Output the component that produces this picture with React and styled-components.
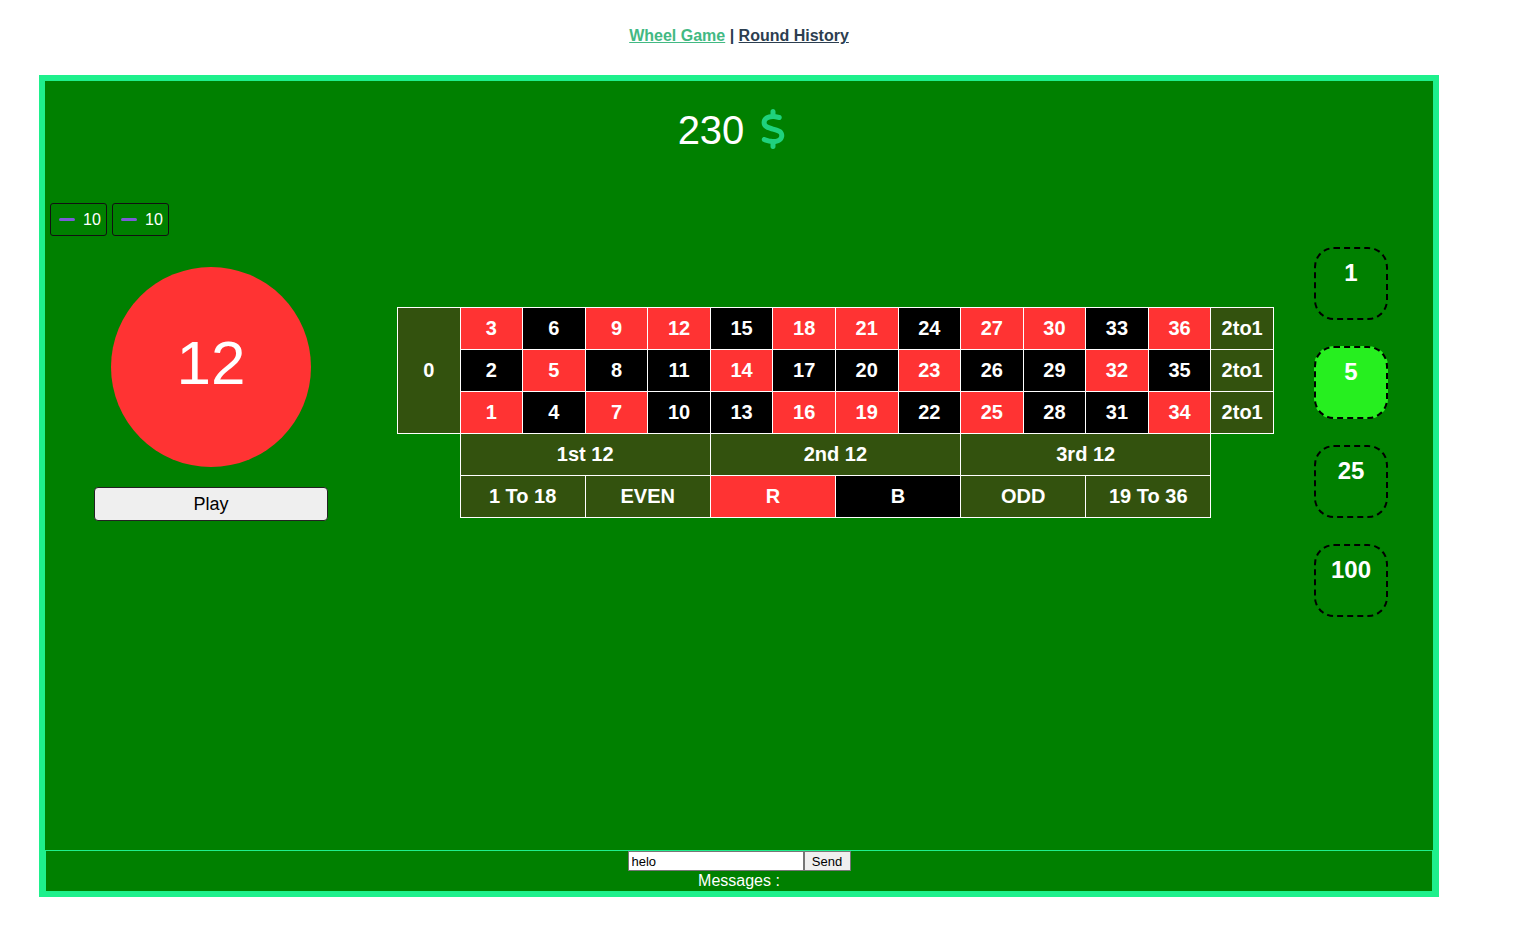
import React from 'react'
import styled, { createGlobalStyle } from 'styled-components'
import { FaDollarSign } from 'react-icons/fa6'

const GlobalStyle = createGlobalStyle`
    body {
        margin: 0;
        background: #fff;
        font-family: "Liberation Sans", Arial, Helvetica, sans-serif;
    }
`

const Page = styled.div`
    width: 1400px;
    margin-left: 39px;
`
const Nav = styled.nav`
    padding-top: 27px;
    height: 18px;
    line-height: 18px;
    text-align: center;
    font-size: 16px;
    font-weight: bold;
    color: #2c3e50;
    margin-bottom: 30px;
`
const NavLink = styled.a`
    color: ${p => (p.$active ? '#42b983' : '#2c3e50')};
    text-decoration: underline;
    cursor: pointer;
`
const Board = styled.div`
    height: 810px;
    border: 6px solid #1ef08c;
    background: #008000;
    display: flex;
    flex-direction: column;
`
const Balance = styled.div`
    padding-top: 26px;
    height: 46px;
    line-height: 46px;
    text-align: center;
    font-size: 40px;
    color: #fff;
    padding-right: 7px;
    svg {
        color: #1fd27d;
        vertical-align: -5px;
        margin-left: 9px;
    }
`
const BetList = styled.div`
    display: flex;
    gap: 5px;
    margin: 50px 0 0 5px;
`
const BetChip = styled.div`
    width: 57px;
    height: 33px;
    box-sizing: border-box;
    border: 1px solid #111;
    border-radius: 3px;
    display: flex;
    align-items: center;
    padding-left: 8px;
    gap: 8px;
    color: #fff;
    font-size: 16px;
`
const Dash = styled.span`
    width: 16px;
    height: 3px;
    border-radius: 1.5px;
    background: #7b5cd6;
`
const MainRow = styled.div`
    display: flex;
    align-items: flex-start;
    margin-top: 11px;
`
const LeftColumn = styled.div`
    width: 234px;
    margin: 20px 0 0 49px;
    display: flex;
    flex-direction: column;
    align-items: center;
`
const Ball = styled.div`
    width: 200px;
    height: 200px;
    box-sizing: border-box;
    padding-bottom: 10px;
    border-radius: 50%;
    background: #ff3333;
    color: #fff;
    font-size: 62px;
    display: flex;
    align-items: center;
    justify-content: center;
`
const PlayButton = styled.button`
    width: 234px;
    height: 34px;
    margin-top: 20px;
    background: #efefef;
    border: 1px solid #222;
    border-radius: 4px;
    font-family: "Liberation Sans", Arial, sans-serif;
    font-size: 18px;
    color: #000;
    cursor: pointer;
`
const Table = styled.table`
    margin: 60px 0 0 69px;
    width: 877px;
    table-layout: fixed;
    border-collapse: collapse;
`
const Row = styled.tr`
    height: 42px;
`
const Cell = styled.td`
    border: ${p => (p.$empty ? 'none' : '1px solid #fff')};
    background: ${p =>
        p.$empty ? 'transparent' : p.$color === 'red' ? '#ff3333' : p.$color === 'black' ? '#000' : '#33520e'};
    color: #fff;
    font-size: 20px;
    font-weight: bold;
    text-align: center;
    padding: 0;
    cursor: pointer;
`
const ChipColumn = styled.div`
    margin-left: 40px;
    display: flex;
    flex-direction: column;
    gap: 26px;
`
const Chip = styled.div`
    width: 74px;
    height: 73px;
    box-sizing: border-box;
    border: 2px dashed #000;
    border-radius: 20px;
    background: ${p => (p.$selected ? '#26ef1f' : 'transparent')};
    color: #fff;
    font-size: 24px;
    font-weight: bold;
    text-align: center;
    padding-top: 10px;
    cursor: pointer;
`
const Footer = styled.div`
    margin-top: auto;
    border: 1px solid #1ef08c;
    border-bottom: none;
    display: flex;
    flex-direction: column;
    align-items: center;
`
const MessageForm = styled.div`
    display: flex;
    height: 20px;
`
const MessageInput = styled.input`
    width: 176px;
    height: 20px;
    box-sizing: border-box;
    border: 1px solid #767676;
    padding: 0 3px;
    font-family: "Liberation Sans", Arial, sans-serif;
    font-size: 13px;
    outline: none;
`
const SendButton = styled.button`
    width: 47px;
    height: 20px;
    box-sizing: border-box;
    border: 1px solid #767676;
    background: #efefef;
    padding: 0;
    font-family: "Liberation Sans", Arial, sans-serif;
    font-size: 13px;
`
const Messages = styled.div`
    color: #fff;
    font-size: 16px;
    line-height: 20px;
    height: 20px;
`

const reds = [1, 3, 5, 7, 9, 12, 14, 16, 18, 19, 21, 23, 25, 27, 30, 32, 34, 36]
const colorOf = n => (reds.includes(n) ? 'red' : 'black')

const App = () => {
    const rows = [3, 2, 1].map(r => Array.from({ length: 12 }, (_, i) => i * 3 + r))
    return (
        <>
            <GlobalStyle />
            <Page>
                <Nav>
                    <NavLink $active>Wheel Game</NavLink> | <NavLink>Round History</NavLink>
                </Nav>
                <Board>
                    <Balance>
                        230<FaDollarSign size={40} />
                    </Balance>
                    <BetList>
                        <BetChip><Dash />10</BetChip>
                        <BetChip><Dash />10</BetChip>
                    </BetList>
                    <MainRow>
                        <LeftColumn>
                            <Ball>12</Ball>
                            <PlayButton>Play</PlayButton>
                        </LeftColumn>
                        <Table>
                            <tbody>
                                {rows.map((nums, ri) => (
                                    <Row key={ri}>
                                        {ri === 0 && <Cell rowSpan={3}>0</Cell>}
                                        {nums.map(n => (
                                            <Cell key={n} $color={colorOf(n)}>{n}</Cell>
                                        ))}
                                        <Cell>2to1</Cell>
                                    </Row>
                                ))}
                                <Row>
                                    <Cell $empty />
                                    <Cell colSpan={4}>1st 12</Cell>
                                    <Cell colSpan={4}>2nd 12</Cell>
                                    <Cell colSpan={4}>3rd 12</Cell>
                                    <Cell $empty />
                                </Row>
                                <Row>
                                    <Cell $empty />
                                    <Cell colSpan={2}>1 To 18</Cell>
                                    <Cell colSpan={2}>EVEN</Cell>
                                    <Cell colSpan={2} $color="red">R</Cell>
                                    <Cell colSpan={2} $color="black">B</Cell>
                                    <Cell colSpan={2}>ODD</Cell>
                                    <Cell colSpan={2}>19 To 36</Cell>
                                    <Cell $empty />
                                </Row>
                            </tbody>
                        </Table>
                        <ChipColumn>
                            <Chip>1</Chip>
                            <Chip $selected>5</Chip>
                            <Chip>25</Chip>
                            <Chip>100</Chip>
                        </ChipColumn>
                    </MainRow>
                    <Footer>
                        <MessageForm>
                            <MessageInput defaultValue="helo" />
                            <SendButton>Send</SendButton>
                        </MessageForm>
                        <Messages>Messages :</Messages>
                    </Footer>
                </Board>
            </Page>
        </>
    )
}

export default App
